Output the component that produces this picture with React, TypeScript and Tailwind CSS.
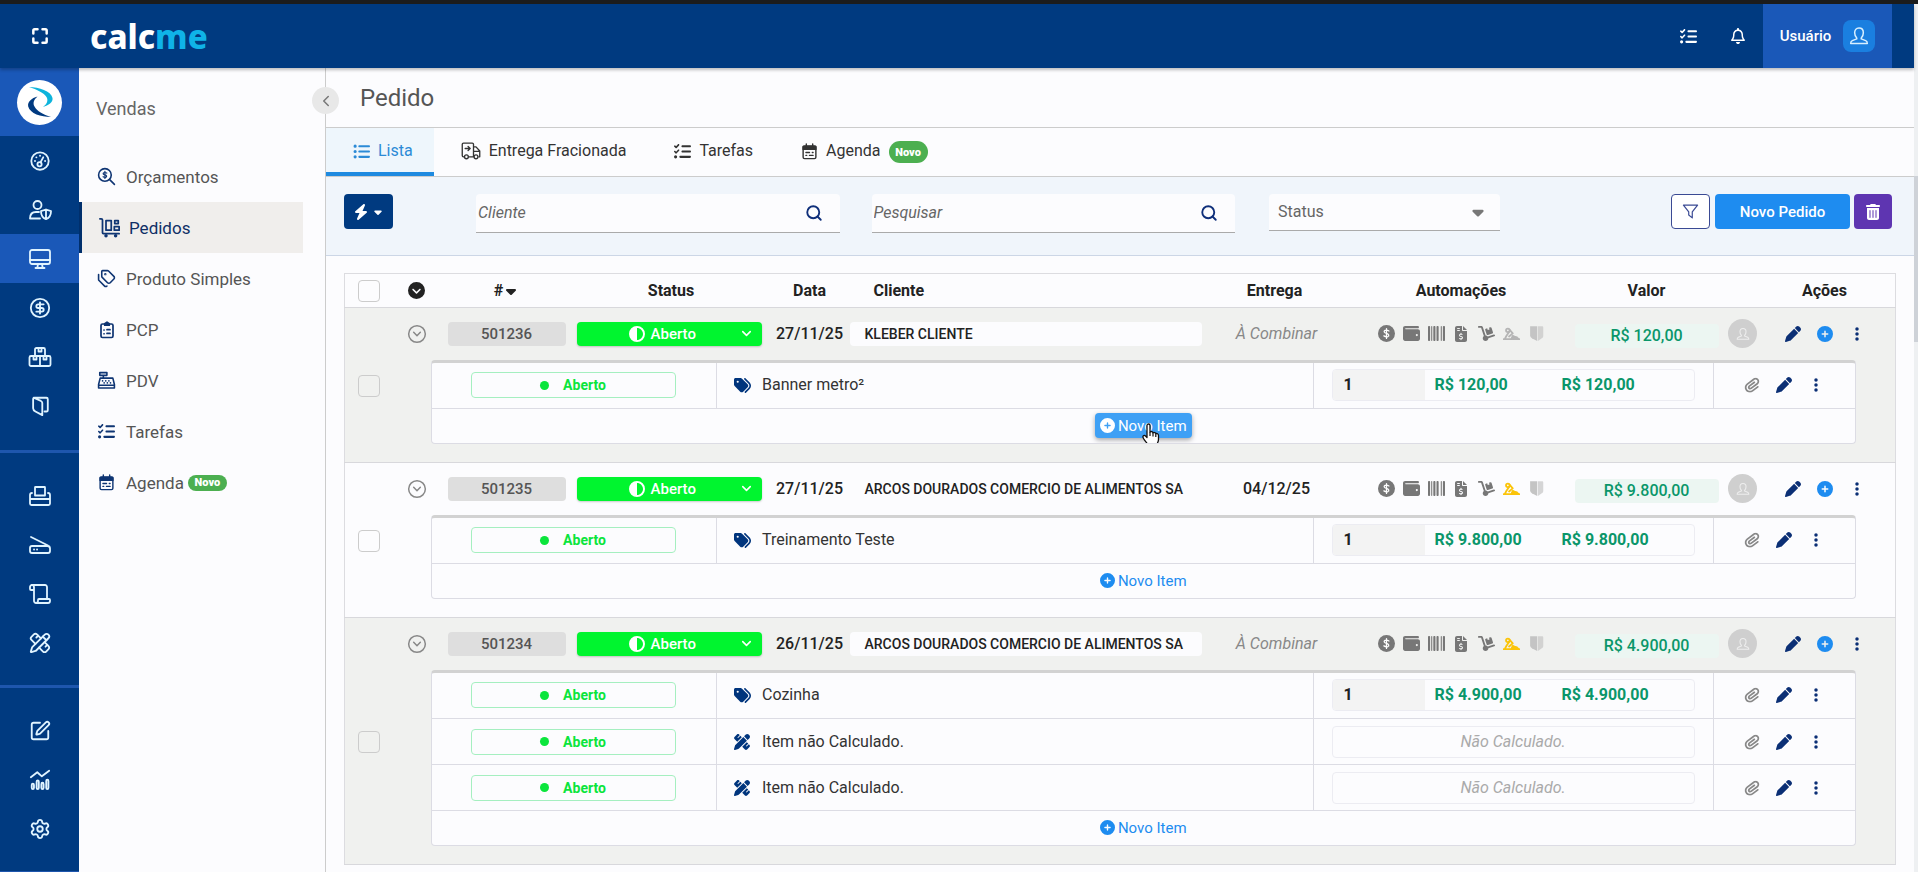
import type { ReactNode } from 'react';
import { clsx } from 'clsx';
import {
  ChevronDown,
  ChevronLeft,
  CircleChevronDown,
  CircleDollarSign,
  PencilRuler,
  Scroll,
  Search,
  Settings,
  SquarePen,
  Tags,
} from 'lucide-react';
import {
  FaBarcode,
  FaBolt,
  FaCaretDown,
  FaCircleChevronDown,
  FaCircleHalfStroke,
  FaCirclePlus,
  FaDolly,
  FaEllipsisVertical,
  FaFileInvoiceDollar,
  FaListCheck,
  FaListUl,
  FaPaperclip,
  FaPen,
  FaPenRuler,
  FaRegBell,
  FaTags,
  FaTrashCan,
  FaWallet,
} from 'react-icons/fa6';

type Item = { name: string; price?: string };

type Order = {
  id: string;
  date: string;
  client: string;
  delivery?: string;
  total: string;
  picked: boolean;
  items: Item[];
};

const orders: Order[] = [
  {
    id: '501236',
    date: '27/11/25',
    client: 'KLEBER CLIENTE',
    total: 'R$ 120,00',
    picked: false,
    items: [{ name: 'Banner metro²', price: 'R$ 120,00' }],
  },
  {
    id: '501235',
    date: '27/11/25',
    client: 'ARCOS DOURADOS COMERCIO DE ALIMENTOS SA',
    delivery: '04/12/25',
    total: 'R$ 9.800,00',
    picked: true,
    items: [{ name: 'Treinamento Teste', price: 'R$ 9.800,00' }],
  },
  {
    id: '501234',
    date: '26/11/25',
    client: 'ARCOS DOURADOS COMERCIO DE ALIMENTOS SA',
    total: 'R$ 4.900,00',
    picked: true,
    items: [
      { name: 'Cozinha', price: 'R$ 4.900,00' },
      { name: 'Item não Calculado.' },
      { name: 'Item não Calculado.' },
    ],
  },
];

const Stroke = ({ children, size = 22, width = 2 }: { children: ReactNode; size?: number; width?: number }) => (
  <svg
    width={size}
    height={size}
    viewBox="0 0 24 24"
    fill="none"
    stroke="currentColor"
    strokeWidth={width}
    strokeLinecap="round"
    strokeLinejoin="round"
    aria-hidden="true"
  >
    {children}
  </svg>
);

const ExpandIcon = () => (
  <Stroke size={20} width={3}>
    <path d="M4 9V5.500Q4 4 5.500 4H9M15 4h3.500Q20 4 20 5.500V9M20 15v3.500Q20 20 18.500 20H15M9 20H5.500Q4 20 4 18.500V15" />
  </Stroke>
);

const GaugeIcon = () => (
  <Stroke>
    <circle cx="12" cy="12" r="9.500" />
    <circle cx="11.500" cy="15.500" r="2.300" />
    <path d="M12.500 13.500 15.500 8M6.500 12h.1M8 8h.1M12 6.300h.1M17.500 12h.1" />
  </Stroke>
);

const UserShieldIcon = () => (
  <Stroke size={24} width={1.800}>
    <circle cx="9.500" cy="7" r="4" />
    <path d="M12 20.500H2c0-4 2-6.500 6-6.500h3" />
    <path d="M18 11.500l5 1.700c0 4-1.500 6.500-5 8-3.500-1.500-5-4-5-8zM18 11.500v9.700" />
  </Stroke>
);

const DesktopIcon = () => (
  <Stroke size={24} width={1.800}>
    <rect x="2" y="3" width="20" height="14" rx="2" />
    <path d="M2 13h20M10 17l-.7 4M14 17l.7 4M7.500 21h9" />
  </Stroke>
);

const BoxesIcon = () => (
  <Stroke size={24} width={1.800}>
    <path d="M7 11V4.500Q7 3 8.500 3h7Q17 3 17 4.500V11" />
    <rect x="1.500" y="11" width="21" height="10" rx="1.500" />
    <path d="M12 11v10M10.500 3v3.500h3V3M5.500 11v3.500h3V11M15.500 11v3.500h3V11" />
  </Stroke>
);

const FoldersIcon = () => (
  <Stroke size={22}>
    <path d="M5 3l8 3.500q1.500.7 1.500 2.300V22l-7.500-4q-2.500-1.300-2.500-3.500V5Q4.500 3 6 3h13q1.500 0 1.500 1.500v12q0 1.500-1.500 1.500h-2" />
  </Stroke>
);

const PrinterIcon = () => (
  <Stroke size={24} width={1.800}>
    <path d="M7 11V3.500Q7 3 7.500 3h9q.5 0 .5.500V11M4 9Q2 9 2 11v8.500Q2 21 3.500 21h17q1.500 0 1.500-1.500V11q0-2-2-2M2 15h20M7 11.500h10" />
  </Stroke>
);

const ScannerIcon = () => (
  <Stroke size={24} width={1.800}>
    <path d="M3 4l17 8.500M4 13h15.500q2.500 0 2.500 2.500V18q0 2-2 2H4q-2 0-2-2v-3q0-2 2-2zM6 16.500h.1M9 16.500h.1" />
  </Stroke>
);

const ChartIcon = () => (
  <Stroke>
    <path d="M2 9l7-5.500 5 4.500 8-6" />
    <path d="M3 17.500q0-1.500 1.200-1.500t1.200 1.500v3q0 1.500-1.200 1.500T3 20.500zM8.300 14q0-1.500 1.200-1.500t1.200 1.500v6.500q0 1.500-1.200 1.500t-1.200-1.500zM13.500 16.500q0-1.500 1.200-1.500t1.200 1.500v4q0 1.500-1.200 1.500t-1.200-1.500zM18.800 13q0-1.500 1.200-1.500t1.200 1.500v7.500q0 1.500-1.200 1.500t-1.200-1.500z" />
  </Stroke>
);

const SearchDollarIcon = () => (
  <Stroke size={19}>
    <circle cx="10" cy="10" r="8" />
    <path d="M16 16l6 6" />
    <path d="M12.300 7.700q-2-1.200-3.700-.5c-1.500.8-.8 2.300 1.400 2.800s2.800 2 1.400 2.800q-1.700.7-3.700-.5M10 5.500v9" strokeWidth="1.500" />
  </Stroke>
);

const CartBoxesIcon = () => (
  <Stroke size={21}>
    <path d="M1 2h1.500Q4 2 4 3.500V18q0 1 1 1h18" />
    <path d="M8 4h6v11H8zM18 4h4v3.500h-4zM17.500 11H23v4h-5.500z" />
    <circle cx="8" cy="21.500" r="1" />
    <circle cx="19" cy="21.500" r="1" />
  </Stroke>
);

const ClipboardIcon = () => (
  <Stroke size={18} width={2.300}>
    <rect x="4" y="4" width="16" height="18" rx="2" />
    <path d="M9 5.500V3.500L12 1.500l3 2v2z" fill="currentColor" />
    <path d="M8 12h.1M12 11.500h4M8 17h.1M12 16.500h4" />
  </Stroke>
);

const RegisterIcon = () => (
  <Stroke size={19}>
    <path d="M3.500 2h9v3.500h-9zM8 5.500V9M4 9h16l2 8v4.500H2V17zM2 18h20" />
    <path d="M7 12.500h.1M11 12.500h.1M15 12.500h.1M9 15h.1M13 15h.1M17 15h.1" />
  </Stroke>
);

const CalendarIcon = () => (
  <Stroke size={17}>
    <rect x="3" y="4" width="18" height="18" rx="2" />
    <path d="M3 5h18v4H3z" fill="currentColor" />
    <path d="M7.500 1.500V5M16.500 1.500V5M7 13.500h5M16 13.500h1M7 17.500h1M12 17.500h5" />
  </Stroke>
);

const TruckIcon = () => (
  <Stroke size={20} width={1.600}>
    <path d="M3.500 19H3q-1.500 0-1.500-1.500V4Q1.500 2.500 3 2.500h10.500Q15 2.500 15 4v15H9M15 7h3l4.500 5v7h-1M15 12.500h7M5 9h6M8.500 6.500 11 9l-2.500 2.500" />
    <circle cx="6.500" cy="19" r="2.300" />
    <circle cx="18" cy="19" r="2.300" />
  </Stroke>
);

const UserIcon = ({ size = 22 }: { size?: number }) => (
  <Stroke size={size} width={1.800}>
    <path d="M12 2.500c3.600 0 5.200 2.500 5.200 5.500 0 2.700-1 4.800-2.500 6.300v1.200l5.300 2q2 .8 2 3.500H2q0-2.700 2-3.500l5.300-2v-1.200C7.800 12.800 6.800 10.700 6.800 8c0-3 1.600-5.500 5.200-5.500z" />
  </Stroke>
);

const FilterIcon = () => (
  <Stroke size={17} width={1.700}>
    <path d="M2 3h20l-7.500 9.500V21l-5-4v-4.500z" />
  </Stroke>
);

const CoinIcon = () => (
  <svg width="17" height="17" viewBox="0 0 24 24" fill="none" aria-hidden="true">
    <circle cx="12" cy="12" r="12" fill="currentColor" />
    <path
      d="M15.500 8.500q-3-1.800-5.500-.9c-2.300 1-1.300 3.300 2 4.200s4.200 3.400 2 4.500q-2.500 1-5.700-.9M12 5v14"
      stroke="#fff"
      strokeWidth="1.800"
      strokeLinecap="round"
    />
  </svg>
);

const RobotArmIcon = () => (
  <svg
    width="20"
    height="18"
    viewBox="0 0 28 24"
    fill="none"
    stroke="currentColor"
    strokeWidth="3"
    strokeLinecap="round"
    strokeLinejoin="round"
    aria-hidden="true"
  >
    <circle cx="8" cy="6" r="3" />
    <path d="M10.500 8 6 14.500l-3 5.500M11 5l5 6M16 11l-6 5M1 20.500h26M17 16.500l6 1" />
    <path d="M14 20l2-5 9 4.500z" fill="currentColor" />
  </svg>
);

const BannerIcon = () => (
  <svg width="17" height="18" viewBox="0 0 24 24" fill="currentColor" aria-hidden="true">
    <path d="M3 1h10v21l-7.500-4q-2.500-1.500-2.500-4z" />
    <path d="M14 1h6q1.500 0 1.500 1.500V15q0 2-2 3L14 22z" opacity=".7" />
  </svg>
);

const BrandMark = () => (
  <span className="flex size-[45px] items-center justify-center rounded-full bg-white">
    <svg width="30" height="32" viewBox="0 0 30 32" aria-hidden="true">
      <path d="M4 1c10 0 22 4 23.500 11 .8 4-4 7.500-9.500 9 4-3 5.500-6.500 3.500-10C19 7 12 3.500 4 1z" fill="#0db4dc" />
      <path d="M26 31C16 31 5 27.500 3.200 20.500 2.200 16 6.500 12 12.500 10.500c-3.500 3-5 6.500-3 10C12 25 18 28.500 26 31z" fill="#003a80" />
    </svg>
  </span>
);

const HandCursor = () => (
  <svg width="19" height="25" viewBox="0 0 19 25" className="absolute top-[10px] left-[46px]" aria-hidden="true">
    <path
      d="M6 2.500c0-2 3-2 3 0V9c1-.8 2.700-.4 3 .8 1-.7 2.500-.2 2.800.9 1-.5 2.700 0 2.700 1.800v4c0 3-2 4-2 7H7.500c0-2.500-3-4.500-5-8-1.500-2.500.5-4 2-2.500L6 14.500z"
      fill="#fff"
      stroke="#111"
      strokeWidth="1.300"
      strokeLinejoin="round"
    />
    <path d="M9 9v4M12 10v3.500M14.800 11v3" stroke="#111" strokeWidth="1.200" />
  </svg>
);

const NovoBadge = ({ className }: { className?: string }) => (
  <span
    className={clsx('flex items-center justify-center bg-[#4caf50] text-[11px] leading-none font-black text-white', className)}
  >
    Novo
  </span>
);

const RailButton = ({ label, active, children }: { label: string; active?: boolean; children: ReactNode }) => (
  <button
    type="button"
    aria-label={label}
    className={clsx('flex h-[49px] w-full items-center justify-center', active && 'bg-[#1a58b8]')}
  >
    {children}
  </button>
);

const Rail = () => (
  <nav className="flex w-[79px] shrink-0 flex-col bg-[#003a80] text-[#e0f4ff]">
    <a href="#" aria-label="Início" className="flex h-[68px] shrink-0 items-center justify-center bg-[#1a58b8]">
      <BrandMark />
    </a>
    <div className="border-b-3 border-[#1e56ad] pb-[20px]">
      <RailButton label="Dashboard"><GaugeIcon /></RailButton>
      <RailButton label="Usuários"><UserShieldIcon /></RailButton>
      <RailButton label="Vendas" active><DesktopIcon /></RailButton>
      <RailButton label="Financeiro"><CircleDollarSign size={22} /></RailButton>
      <RailButton label="Estoque"><BoxesIcon /></RailButton>
      <RailButton label="Catálogo"><FoldersIcon /></RailButton>
    </div>
    <div className="border-b-3 border-[#1e56ad] py-[18px]">
      <RailButton label="Impressão"><PrinterIcon /></RailButton>
      <RailButton label="Digitalização"><ScannerIcon /></RailButton>
      <RailButton label="Documentos"><Scroll size={24} strokeWidth={1.800} /></RailButton>
      <RailButton label="Design"><PencilRuler size={22} /></RailButton>
    </div>
    <div className="border-b-3 border-[#1e56ad] py-[18px]">
      <RailButton label="Editar"><SquarePen size={22} /></RailButton>
      <RailButton label="Relatórios"><ChartIcon /></RailButton>
      <RailButton label="Configurações"><Settings size={22} /></RailButton>
    </div>
  </nav>
);

const SideLink = ({
  icon,
  active,
  children,
}: {
  icon: ReactNode;
  active?: boolean;
  children: ReactNode;
}) => (
  <a
    href="#"
    className={clsx(
      'mr-[22px] flex h-[51px] items-center gap-2 pl-[17px]',
      active ? 'border-l-3 border-[#002f6c] bg-[#f0eeec] text-[#0f2f66]' : 'text-[#555]',
    )}
  >
    <span className="flex w-[21px] justify-center text-[#0f3573]">{icon}</span>
    <span className="pl-px">{children}</span>
  </a>
);

const Sidebar = () => (
  <aside className="relative w-[247px] shrink-0 border-r border-[#ccc] bg-[#fcfcfe]">
    <h2 className="pt-[29px] pb-[30px] pl-[17px] text-[18px] leading-6 text-[#666]">Vendas</h2>
    <nav className="text-[17px]">
      <SideLink icon={<SearchDollarIcon />}>Orçamentos</SideLink>
      <SideLink icon={<CartBoxesIcon />} active>
        Pedidos
      </SideLink>
      <SideLink icon={<Tags size={19} />}>Produto Simples</SideLink>
      <SideLink icon={<ClipboardIcon />}>PCP</SideLink>
      <SideLink icon={<RegisterIcon />}>PDV</SideLink>
      <SideLink icon={<FaListCheck size={17} />}>Tarefas</SideLink>
      <SideLink icon={<CalendarIcon />}>
        <span className="flex items-center gap-1">
          Agenda
          <NovoBadge className="h-4 w-[39px] rounded-full" />
        </span>
      </SideLink>
    </nav>
    <button
      type="button"
      aria-label="Recolher menu"
      className="absolute top-[19px] -right-[14px] z-10 flex size-[27px] items-center justify-center rounded-full bg-[#e8e8e8] text-[#777]"
    >
      <ChevronLeft size={18} />
    </button>
  </aside>
);

const Header = () => (
  <header className="z-20 flex h-[64px] shrink-0 items-center bg-[#003a80] text-white shadow-[0_2px_3px_rgba(0,0,0,0.25)]">
    <button type="button" aria-label="Tela cheia" className="flex w-[79px] justify-center">
      <ExpandIcon />
    </button>
    <a href="#" className="pl-[11px] font-['Noto_Sans',sans-serif] text-[33px] leading-none font-extrabold">
      calc<span className="text-[#0fb3e8]">me</span>
    </a>
    <div className="ml-auto flex h-full items-center pr-[22px]">
      <button type="button" aria-label="Tarefas" className="mr-[33px]">
        <FaListCheck size={17} />
      </button>
      <button type="button" aria-label="Notificações" className="mr-[17px]">
        <FaRegBell size={16} />
      </button>
      <button type="button" className="flex h-full w-[129px] items-center justify-center gap-3 bg-[#1a58b8] font-medium">
        <span className="text-[15px]">Usuário</span>
        <span className="flex size-8 items-center justify-center rounded-lg bg-[#1a7fe0] text-[#d8f0ff]">
          <UserIcon size={20} />
        </span>
      </button>
    </div>
  </header>
);

const Tab = ({ icon, active, children }: { icon: ReactNode; active?: boolean; children: ReactNode }) => (
  <button
    type="button"
    role="tab"
    aria-selected={!!active}
    className={clsx(
      'flex items-center gap-2 border-b-4 pt-0.5 pr-[21px] pl-[27px]',
      active ? 'border-[#1e8ae0] bg-[#eef6fc] text-[#2b8ad6]' : 'border-transparent text-[#333]',
    )}
  >
    {icon}
    {children}
  </button>
);

const SearchBox = ({ label }: { label: string }) => (
  <div className="flex h-[39px] flex-1 items-center rounded-t border-b border-[#aaa] bg-[#fcfcfe]">
    <input
      type="text"
      aria-label={label}
      placeholder={label}
      className="w-full min-w-0 bg-transparent pl-[2px] italic outline-none placeholder:text-[#666]"
    />
    <button type="button" aria-label={`Buscar ${label}`} className="pr-[17px] text-[#0f2f7a]">
      <Search size={18} strokeWidth={2.500} />
    </button>
  </div>
);

const Toolbar = () => (
  <div className="flex h-[79px] items-start border-b border-[#ccd6e6] bg-[#f0f5fb] pt-[17px] pr-[22px] pl-[18px]">
    <button
      type="button"
      aria-label="Ações rápidas"
      className="mr-[83px] flex h-[35px] w-[49px] items-center justify-center gap-[3px] rounded bg-[#003a80] text-white"
    >
      <FaBolt size={16} />
      <FaCaretDown size={12} />
    </button>
    <SearchBox label="Cliente" />
    <div className="w-8" />
    <SearchBox label="Pesquisar" />
    <div className="relative mr-[171px] ml-[34px] w-[231px]">
      <select
        aria-label="Status"
        className="h-[37px] w-full appearance-none rounded-t border-b border-[#aaa] bg-[#fcfcfe] pl-[9px] text-[#666] outline-none"
      >
        <option>Status</option>
        <option>Aberto</option>
      </select>
      <FaCaretDown size={18} className="pointer-events-none absolute top-[9px] right-[13px] text-[#777]" />
    </div>
    <button
      type="button"
      aria-label="Filtrar"
      className="mr-[5px] flex h-[35px] w-[39px] items-center justify-center rounded border border-[#3a4a94] bg-white text-[#3a4a94]"
    >
      <FilterIcon />
    </button>
    <button type="button" className="mr-1 h-[35px] w-[135px] rounded bg-[#1e8cf0] text-[15px] font-medium text-white">
      Novo Pedido
    </button>
    <button
      type="button"
      aria-label="Excluir"
      className="flex h-[35px] w-[38px] items-center justify-center rounded bg-[#5e35b1] text-white"
    >
      <FaTrashCan size={16} />
    </button>
  </div>
);

const Checkbox = ({ label }: { label: string }) => (
  <input
    type="checkbox"
    aria-label={label}
    className="ml-[13px] block size-[22px] appearance-none rounded-sm border border-[#ccc]"
  />
);

const ItemRow = ({ item }: { item: Item }) => (
  <tr className="h-[46px] border-b border-[#dcdce4]">
    <td className="border-r border-[#dcdce4] pl-[39px]">
      <button
        type="button"
        className="flex h-[26px] w-[205px] items-center justify-center gap-[14px] rounded border border-[#a5efc0] text-[14px] font-bold text-[#0be53c]"
      >
        <span className="size-[9px] rounded-full bg-[#0be53c]" />
        Aberto
      </button>
    </td>
    <td className="border-r border-[#dcdce4] pl-[17px]">
      <div className="flex items-center gap-[10px] text-[#333]">
        <span className="w-[18px] text-[#00357d]">{item.price ? <FaTags size={17} /> : <FaPenRuler size={16} />}</span>
        {item.name}
      </div>
    </td>
    <td className="border-r border-[#dcdce4] pr-[18px] pl-[18px]">
      {item.price ? (
        <div className="flex h-8 items-center overflow-hidden rounded border border-[#ececf2] font-bold text-[#0a966a]">
          <span className="flex h-full w-[92px] items-center bg-[#f3f3f3] pl-[11px] text-[#222]">1</span>
          <span className="w-[127px] pl-[10px]">{item.price}</span>
          <span className="pl-[10px]">{item.price}</span>
        </div>
      ) : (
        <div className="flex h-8 items-center justify-center rounded border border-[#ececf2] text-[#aaa] italic">
          Não Calculado.
        </div>
      )}
    </td>
    <td>
      <div className="flex items-center gap-4 pl-[30px] text-[#0b2f75]">
        <button type="button" aria-label="Anexos" className="text-[#888]">
          <FaPaperclip size={16} className="rotate-[8deg]" />
        </button>
        <button type="button" aria-label="Editar item">
          <FaPen size={16} />
        </button>
        <button type="button" aria-label="Mais opções" className="flex w-4 justify-center">
          <FaEllipsisVertical size={16} />
        </button>
      </div>
    </td>
  </tr>
);

const OrderGroup = ({ order, index }: { order: Order; index: number }) => (
  <tbody className={clsx('border-b border-[#d8d8dc]', index % 2 === 0 ? 'bg-[#f0f1ef]' : 'bg-[#fcfcfe]')}>
    <tr className="h-[52px]">
      <td />
      <td>
        <button type="button" aria-label="Recolher pedido" className="flex w-full justify-center text-[#888]">
          <CircleChevronDown size={20} strokeWidth={1.800} />
        </button>
      </td>
      <td className="px-[7px]">
        <span className="flex h-6 items-center justify-center rounded bg-[#dedede] text-[15px] font-medium text-[#555]">
          {order.id}
        </span>
      </td>
      <td className="pr-2 pl-1">
        <button
          type="button"
          className="flex h-6 w-full items-center rounded bg-[#00f52f] pr-2 pl-[52px] text-[15px] font-medium text-white shadow-[0_1px_2px_rgba(0,0,0,0.2)]"
        >
          <FaCircleHalfStroke size={16} className="mr-[6px]" />
          Aberto
          <ChevronDown size={15} strokeWidth={2.500} className="ml-auto" />
        </button>
      </td>
      <td className="text-center font-medium">{order.date}</td>
      <td>
        <span className="flex h-6 items-center rounded bg-[#fcfcfe] pl-[15px] text-[14px] font-medium whitespace-nowrap">
          {order.client}
        </span>
      </td>
      <td className="pl-1 text-center">
        {order.delivery ? (
          <span className="font-medium">{order.delivery}</span>
        ) : (
          <span className="text-[#888] italic">À Combinar</span>
        )}
      </td>
      <td>
        <div className="flex items-center justify-center gap-2 text-[#777]">
          <CoinIcon />
          <FaWallet size={17} />
          <FaBarcode size={17} />
          <span className="flex w-[17px] justify-center">
            <FaFileInvoiceDollar size={16} />
          </span>
          <FaDolly size={17} />
          <span className={clsx('flex w-[17px] justify-center', order.picked ? 'text-[#fbc40a]' : 'text-[#b5b5b5]')}>
            <RobotArmIcon />
          </span>
          <span className="text-[#c4c4c4]">
            <BannerIcon />
          </span>
        </div>
      </td>
      <td>
        <span className="mt-1 flex h-6 items-center justify-center rounded bg-[#ecf6f2] font-medium text-[#0a966a]">
          {order.total}
        </span>
      </td>
      <td>
        <span className="mx-auto flex size-[29px] items-center justify-center rounded-full bg-[#cfcfcf] text-[#eee]">
          <UserIcon size={14} />
        </span>
      </td>
      <td>
        <div className="flex items-center justify-center gap-4 text-[#0b2f75]">
          <button type="button" aria-label="Editar pedido">
            <FaPen size={16} />
          </button>
          <button type="button" aria-label="Adicionar item" className="text-[#1e8cf0]">
            <FaCirclePlus size={16} />
          </button>
          <button type="button" aria-label="Mais opções" className="flex w-4 justify-center">
            <FaEllipsisVertical size={16} />
          </button>
        </div>
      </td>
      <td />
    </tr>
    <tr>
      <td className="pb-[50px]">
        <Checkbox label={`Selecionar pedido ${order.id}`} />
      </td>
      <td colSpan={11} className="pr-[39px] pb-[18px] pl-[38px]">
        <div className="overflow-hidden rounded border border-t-3 border-[#dcdce4] border-t-[#d2d2d2] bg-[#fcfcfe]">
          <table className="w-full table-fixed border-collapse">
            <colgroup>
              <col className="w-[285px]" />
              <col />
              <col className="w-[400px]" />
              <col className="w-[142px]" />
            </colgroup>
            <tbody>
              {order.items.map((item, i) => (
                <ItemRow key={i} item={item} />
              ))}
            </tbody>
          </table>
          <div className="flex h-[34px] items-start justify-center pt-1">
            {index === 0 ? (
              <button
                type="button"
                className="relative flex h-[25px] w-[97px] items-center justify-center gap-[3px] rounded-sm bg-[#3ea0f5] text-[15px] text-white shadow-[0_2px_5px_rgba(0,0,0,0.35)]"
              >
                <FaCirclePlus size={15} />
                Novo Item
                <HandCursor />
              </button>
            ) : (
              <button type="button" className="flex h-[25px] w-[97px] items-center justify-center gap-[3px] text-[15px] text-[#1e8cf0]">
                <FaCirclePlus size={15} />
                Novo Item
              </button>
            )}
          </div>
        </div>
      </td>
    </tr>
  </tbody>
);

const OrdersTable = () => (
  <table className="w-full table-fixed border-collapse border border-[#dcdce0] text-[#222]">
    <colgroup>
      <col className="w-12" />
      <col className="w-12" />
      <col className="w-[132px]" />
      <col className="w-[197px]" />
      <col className="w-20" />
      <col />
      <col className="w-[146px]" />
      <col className="w-[227px]" />
      <col className="w-36" />
      <col className="w-12" />
      <col className="w-[116px]" />
      <col className="w-[13px]" />
    </colgroup>
    <thead>
      <tr className="h-[34px] border-b border-[#d8d8dc]">
        <th>
          <Checkbox label="Selecionar todos" />
        </th>
        <th>
          <FaCircleChevronDown size={17} className="mx-auto" />
        </th>
        <th>
          <span className="flex items-center justify-center">
            #<FaCaretDown size={16} />
          </span>
        </th>
        <th>Status</th>
        <th>Data</th>
        <th className="pl-6 text-left">Cliente</th>
        <th>Entrega</th>
        <th>Automações</th>
        <th>Valor</th>
        <th />
        <th>Ações</th>
        <th />
      </tr>
    </thead>
    {orders.map((order, index) => (
      <OrderGroup key={order.id} order={order} index={index} />
    ))}
  </table>
);

const App = () => (
  <div className="flex h-screen overflow-hidden border-t-4 border-[#1c1c1c] bg-[#fcfcfe] font-[Roboto,sans-serif] text-[16px] leading-5">
    <div className="flex min-w-0 flex-1 flex-col">
      <Header />
      <div className="flex min-h-0 flex-1">
        <Rail />
        <Sidebar />
        <main className="min-w-0 flex-1 overflow-hidden">
          <h1 className="flex h-[60px] items-center border-b border-[#ccc] pl-[34px] text-[24px] text-[#555]">Pedido</h1>
          <div role="tablist" className="flex h-[49px] border-b border-[#ccc]">
            <Tab icon={<FaListUl size={17} />} active>
              Lista
            </Tab>
            <Tab icon={<TruckIcon />}>Entrega Fracionada</Tab>
            <Tab icon={<FaListCheck size={17} />}>Tarefas</Tab>
            <Tab icon={<CalendarIcon />}>
              Agenda
              <NovoBadge className="mt-0.5 h-[22px] w-[39px] rounded-full" />
            </Tab>
          </div>
          <Toolbar />
          <div className="pt-[17px] pr-[18px] pl-[18px]">
            <OrdersTable />
          </div>
        </main>
      </div>
    </div>
    <div className="w-1 bg-[#eef0f2] pt-[172px]">
      <div className="h-[166px] bg-[#ced2d8]" />
    </div>
  </div>
);

export default App;
